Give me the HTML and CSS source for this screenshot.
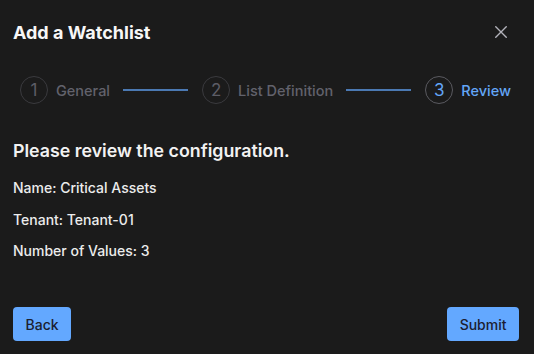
FILE: index.html
```html
<!DOCTYPE html>
<html lang="en">
<head>
<meta charset="utf-8">
<title>Add a Watchlist</title>
<link rel="stylesheet" href="styles.css">
</head>
<body>
<div class="dialog">
  <header class="header">
    <h1 class="title">Add a Watchlist</h1>
    <button class="close" aria-label="Close">
      <svg width="12" height="12" viewBox="0 0 12 12"><path d="M0.75 0.75L11.25 11.25M11.25 0.75L0.75 11.25" stroke="#b4b4bc" stroke-width="1.4" fill="none" stroke-linecap="round"/></svg>
    </button>
  </header>
  <div class="stepper">
    <div class="step"><span class="num">1</span><span class="label">General</span></div>
    <div class="line"></div>
    <div class="step"><span class="num">2</span><span class="label">List Definition</span></div>
    <div class="line"></div>
    <div class="step active"><span class="num">3</span><span class="label">Review</span></div>
  </div>
  <main class="content">
    <h2 class="heading">Please review the configuration.</h2>
    <p class="item">Name: Critical Assets</p>
    <p class="item">Tenant: Tenant-01</p>
    <p class="item">Number of Values: 3</p>
  </main>
  <footer class="footer">
    <button class="btn">Back</button>
    <button class="btn">Submit</button>
  </footer>
</div>
</body>
</html>
```
FILE: styles.css
```css
* { box-sizing: border-box; }
html, body {
  margin: 0;
  padding: 0;
  background: #1b1b1b;
  height: 100%;
}
body {
  font-family: Inter, "Noto Sans", sans-serif;
  color: #ececec;
}
.dialog {
  padding: 21px 15px 0 13px;
  height: 354px;
  display: flex;
  flex-direction: column;
}
.header {
  display: flex;
  align-items: center;
  justify-content: space-between;
  height: 24px;
}
.title {
  margin: 0;
  font-size: 18px;
  line-height: 24px;
  font-weight: 700;
  color: #f7f7f7;
}
.close {
  background: none;
  border: 0;
  padding: 0;
  width: 12px;
  height: 12px;
  display: flex;
  margin-right: 12px;
  margin-top: -2px;
}
.stepper {
  display: flex;
  align-items: center;
  margin-top: 31px;
  padding: 0 8px 0 7px;
}
.step {
  display: flex;
  align-items: center;
  gap: 8px;
}
.num {
  width: 28px;
  height: 28px;
  border-radius: 50%;
  border: 1px solid #3a3a3e;
  display: flex;
  align-items: center;
  justify-content: center;
  font-size: 17px;
  color: #5d5d66;
  font-weight: 400;
}
.label {
  font-size: 14.5px;
  color: #62626c;
  font-weight: 500;
}
.active .num {
  border-color: #5a5a60;
  color: #63a6f7;
}
.active .label {
  color: #63a6f7;
}
.line {
  flex: 1;
  height: 2px;
  background: #4b79b3;
  margin: 0 14px 0 13px;
}
.content {
  margin-top: 35px;
}
.heading {
  margin: 0 0 15px;
  font-size: 17.8px;
  line-height: 24px;
  font-weight: 600;
  color: #f2f2f2;
}
.item {
  margin: 0 0 11.5px;
  font-size: 14px;
  line-height: 20px;
  font-weight: 500;
  color: #ececec;
}
.footer {
  margin-top: auto;
  margin-bottom: 13px;
  display: flex;
  justify-content: space-between;
}
.btn {
  height: 34px;
  padding: 0 12.5px;
  border: 0;
  border-radius: 4px;
  background: #63a8ff;
  color: #1b2030;
  font-family: Inter, "Noto Sans", sans-serif;
  font-size: 14px;
  font-weight: 500;
}
```
